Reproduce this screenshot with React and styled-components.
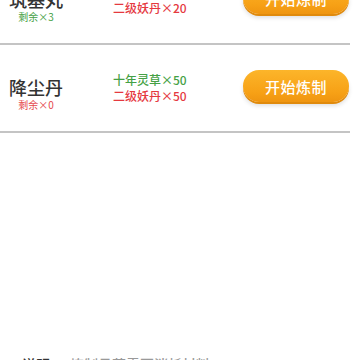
import styled, { createGlobalStyle } from 'styled-components'

const GlobalStyle = createGlobalStyle`
  html, body {
    margin: 0;
    padding: 0;
    background: #ffffff;
    overflow: hidden;
  }
  body {
    font-family: "Noto Sans CJK SC", "Noto Sans", sans-serif;
  }
`

// Page is shown scrolled, the first row is partly above the top edge
const Page = styled.div`
  width: 360px;
  margin-top: -43px;
`

const List = styled.div`
  width: 350px;
`

const Row = styled.div`
  display: flex;
  align-items: center;
  height: 86px;
  border-bottom: 2px solid #c4c4c4;
`

const NameCol = styled.div`
  width: 72px;
  margin-top: 10px;
  display: flex;
  flex-direction: column;
  align-items: center;
`

const Name = styled.div`
  font-size: 18px;
  line-height: 22px;
  font-weight: 500;
  color: #333333;
`

const Left = styled.div`
  font-size: 10px;
  line-height: 13px;
  color: ${p => (p.$empty ? '#e5484d' : '#45a145')};
`

const IngCol = styled.div`
  flex: 1;
  padding-left: 41px;
  display: flex;
  flex-direction: column;
`

const Ing = styled.div`
  font-size: 12px;
  line-height: 16px;
  font-weight: 500;
  color: ${p => (p.$ok ? '#45a145' : '#e5393f')};
`

const Button = styled.button`
  width: 106px;
  height: 32px;
  margin: 0 1px 4px 0;
  border: none;
  border-radius: 16px;
  background: linear-gradient(#fcb52a, #f7a116 70%, #ef9510);
  box-shadow: 0 2px 0 #e08a0c, 0 4px 4px rgba(0, 0, 0, 0.12);
  color: #ffffff;
  font-family: "Noto Sans CJK SC", sans-serif;
  font-size: 15px;
  font-weight: 500;
  letter-spacing: 0.5px;
  padding: 0;
`

const Note = styled.div`
  margin-top: 221px;
  padding-left: 22px;
  font-size: 14px;
  line-height: 20px;
  font-weight: 500;
  color: #333333;
  span {
    color: #999999;
    margin-left: 6px;
  }
`

const pills = [
  { name: '筑基丸', left: 3, ings: [['十年灵草×20', true], ['二级妖丹×20', false]] },
  { name: '降尘丹', left: 0, ings: [['十年灵草×50', true], ['二级妖丹×50', false]] },
]

function App() {
  return (
    <>
      <GlobalStyle />
      <Page>
        <List>
          {pills.map(p => (
            <Row key={p.name}>
              <NameCol>
                <Name>{p.name}</Name>
                <Left $empty={p.left === 0}>剩余×{p.left}</Left>
              </NameCol>
              <IngCol>
                {p.ings.map(([t, ok]) => (
                  <Ing key={t} $ok={ok}>{t}</Ing>
                ))}
              </IngCol>
              <Button>开始炼制</Button>
            </Row>
          ))}
        </List>
        <Note>
          说明：<span>炼制丹药需要消耗材料</span>
        </Note>
      </Page>
    </>
  )
}

export default App
